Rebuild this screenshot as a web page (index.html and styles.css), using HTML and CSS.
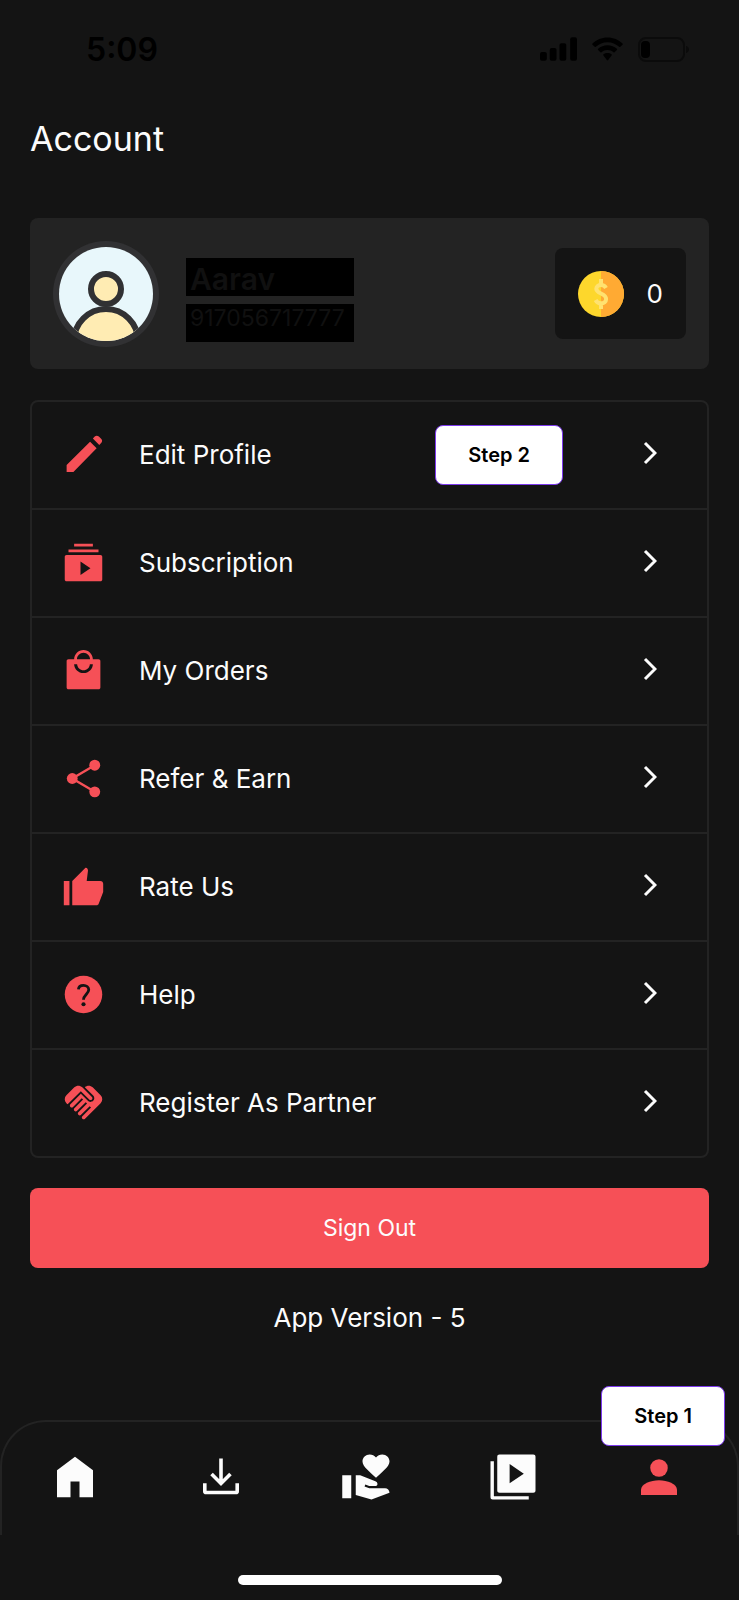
FILE: index.html
```html
<!DOCTYPE html>
<html lang="en">
  <head>
    <meta charset="UTF-8" />
    <meta name="viewport" content="width=device-width, initial-scale=1.0" />
    <title>Account</title>
    <link rel="stylesheet" href="styles.css">
  </head>
  <body>
    <!-- Status bar -->
    <div class="statusbar">
      <span class="time">5:09</span>
      <div class="status-icons">
        <svg width="37" height="24" viewBox="0 0 38 24">
          <rect x="0" y="15" width="7" height="9" rx="2" />
          <rect x="10" y="11" width="7" height="13" rx="2" />
          <rect x="20" y="6" width="7" height="18" rx="2" />
          <rect x="31" y="0" width="7" height="24" rx="2" />
        </svg>
        <svg width="31" height="24" viewBox="0 0 32 24">
          <path d="M16 0C10 0 4.500 2.300 .5 6.200c-.4.400-.4.900 0 1.300L2.800 9.800c.3.300.9.300 1.200 0C7.200 6.700 11.400 5 16 5s8.800 1.700 12 4.800c.3.300.9.300 1.200 0l2.300-2.300c.4-.4.400-.9 0-1.300C27.500 2.300 22 0 16 0z" />
          <path d="M16 8c-3.700 0-7.100 1.400-9.700 3.800-.4.300-.4.900 0 1.200l2.400 2.400c.3.300.8.300 1.200 0C11.500 13.900 13.600 13 16 13s4.500.9 6.100 2.400c.4.300.9.300 1.200 0l2.400-2.400c.4-.3.400-.9 0-1.200C23.100 9.400 19.700 8 16 8z" />
          <path d="M16 16c-1.600 0-3 .5-4.200 1.500-.4.300-.4.900 0 1.200l3.500 4.700c.4.500 1 .5 1.400 0l3.500-4.700c.4-.3.400-.9 0-1.200C19 16.500 17.600 16 16 16z" />
        </svg>
        <svg width="51" height="25" viewBox="0 0 51 25">
          <rect class="battery-shell" x="1" y="1" width="45" height="23" rx="7" />
          <rect x="3" y="4" width="9" height="17" rx="4" />
          <path class="battery-cap" d="M48 9c2 .6 3 1.900 3 3.500S50 15.400 48 16z" />
        </svg>
      </div>
    </div>

    <main>
      <h1>Account</h1>

      <!-- Profile card -->
      <section class="profile">
        <svg class="avatar" viewBox="0 0 106 106">
          <defs>
            <clipPath id="face"><circle cx="53" cy="53" r="47" /></clipPath>
          </defs>
          <circle cx="53" cy="53" r="53" fill="#313133" />
          <circle cx="53" cy="53" r="47" fill="#e8f7fb" />
          <g clip-path="url(#face)" fill="#ffecb3" stroke="#313133" stroke-width="6">
            <circle cx="53" cy="100" r="32" />
            <circle cx="53" cy="48" r="15" />
          </g>
        </svg>
        <div class="user">
          <strong class="user-name">Aarav</strong>
          <span class="user-phone">917056717777</span>
        </div>
        <div class="coins">
          <svg width="46" height="46" viewBox="0 0 46 46">
            <circle cx="23" cy="23" r="23" fill="#fdd72c" />
            <path d="M23 0a23 23 0 0 1 0 46z" fill="#ffaa33" />
            <path d="M28 17c-1-2-2.700-3-5-3-2.800 0-4.700 1.400-4.700 3.700 0 5.400 9.800 4.200 9.800 10.200 0 2.700-2.100 4.400-5.100 4.400-2.500 0-4.300-1.100-5.400-3.300M23 8v6M23 32v6" fill="none" stroke="#ffe270" stroke-width="4" />
          </svg>
          <span>0</span>
        </div>
      </section>

      <!-- Menu -->
      <nav class="menu">
        <a href="#">
          <svg class="icon" viewBox="0 0 24 24"><path d="M3 17.600V21.300h3.600L19 8.700 15.500 5.200zM17 3.500l3.400 3.400 1-1c.7-.7.7-1.700 0-2.300l-1.200-1.200c-.7-.6-1.600-.6-2.200 0z" /></svg>
          <span>Edit Profile</span>
          <svg class="chevron" viewBox="0 0 14 24"><path d="M2 2l10 10L2 22" /></svg>
          <b class="step step-2">Step 2</b>
        </a>
        <a href="#">
          <svg class="icon" viewBox="0 0 24 24"><path d="M7 2h10v1.500H7zM4 5h16v1.500H4zM21 8H3c-.6 0-1 .4-1 1v12c0 .6.400 1 1 1h18c.6 0 1-.4 1-1V9c0-.6-.4-1-1-1zM10.400 18.600v-7.200l5.300 3.600z" /></svg>
          <span>Subscription</span>
          <svg class="chevron" viewBox="0 0 14 24"><path d="M2 2l10 10L2 22" /></svg>
        </a>
        <a href="#">
          <svg class="icon" viewBox="0 0 24 24"><path d="M20 6h-3c0-2.760-2.240-5-5-5S7 3.240 7 6H4c-.6 0-1 .4-1 1v14c0 .6.400 1 1 1h16c.6 0 1-.4 1-1V7c0-.6-.4-1-1-1zm-8-3.500c1.900 0 3.500 1.600 3.500 3.500h-7c0-1.900 1.600-3.500 3.500-3.500zM12 13.300c-2.760 0-4.900-2-5-4.700h1.600c.1 1.800 1.600 3.200 3.400 3.200s3.300-1.400 3.400-3.200H17c-.1 2.700-2.240 4.700-5 4.700z" /></svg>
          <span>My Orders</span>
          <svg class="chevron" viewBox="0 0 14 24"><path d="M2 2l10 10L2 22" /></svg>
        </a>
        <a href="#">
          <svg class="icon" viewBox="0 0 24 24">
            <path class="wire" d="M18 4.900L6 12l12 7.100" />
            <circle cx="18" cy="4.900" r="2.900" />
            <circle cx="6" cy="12" r="2.900" />
            <circle cx="18" cy="19.100" r="2.900" />
          </svg>
          <span>Refer &amp; Earn</span>
          <svg class="chevron" viewBox="0 0 14 24"><path d="M2 2l10 10L2 22" /></svg>
        </a>
        <a href="#">
          <svg class="icon" viewBox="0 0 24 24"><path d="M1.500 22h3V9h-3v13zM22.500 10.500c0-.9-.6-1.500-1.500-1.500h-7.300l.7-5.500c.1-.8-.8-2-1.600-1.300L6 9V22h13c.5 0 .9-.3 1.100-.8l2.300-6c.1-.2.100-.4.100-.7z" /></svg>
          <span>Rate Us</span>
          <svg class="chevron" viewBox="0 0 14 24"><path d="M2 2l10 10L2 22" /></svg>
        </a>
        <a href="#">
          <svg class="icon" viewBox="0 0 24 24">
            <circle cx="12" cy="12" r="10" />
            <path class="cut" d="M9.300 9.300C9.400 7.900 10.500 7.100 12 7.100s2.800.9 2.800 2.400c0 2.100-2.800 2.700-2.800 5.300" />
            <circle class="dot" cx="12" cy="17.200" r="1.100" />
          </svg>
          <span>Help</span>
          <svg class="chevron" viewBox="0 0 14 24"><path d="M2 2l10 10L2 22" /></svg>
        </a>
        <a href="#">
          <svg class="icon" viewBox="0 0 24 24"><path d="M16.480 10.410c-.39.390-1.040.390-1.430 0l-4.470-4.460-7.050 7.040-.66-.63c-1.170-1.170-1.170-3.070 0-4.240l4.240-4.240c1.170-1.170 3.070-1.170 4.240 0L16.480 9c.39.390.39 1.020 0 1.410zM17.180 8.290c.78.780.78 2.050 0 2.830-1.270 1.270-2.610.220-2.830 0l-3.760-3.760-5.570 5.570c-.39.390-.39 1.020 0 1.410.39.390 1.020.390 1.420 0l4.620-4.620.71.710-4.620 4.620c-.39.390-.39 1.020 0 1.410.39.390 1.020.390 1.420 0l4.620-4.620.71.710-4.620 4.620c-.39.390-.39 1.020 0 1.410.39.390 1.020.390 1.410 0l4.620-4.620.71.710-4.620 4.620c-.39.390-.39 1.020 0 1.410.39.390 1.020.390 1.410 0l8.320-8.340c1.170-1.170 1.170-3.070 0-4.240l-4.240-4.240c-1.150-1.150-3.010-1.170-4.180-.06l4.470 4.470z" /></svg>
          <span>Register As Partner</span>
          <svg class="chevron" viewBox="0 0 14 24"><path d="M2 2l10 10L2 22" /></svg>
        </a>
      </nav>

      <button class="sign-out" type="button">Sign Out</button>
      <p class="version">App Version - 5</p>
    </main>

    <!-- Bottom tabs -->
    <footer>
      <nav class="tabs">
        <a href="#" aria-label="Home">
          <svg viewBox="0 0 24 24"><path d="M4 21V9l8-6 8 6v12h-6v-7h-4v7z" /></svg>
        </a>
        <a href="#" aria-label="Downloads">
          <svg viewBox="0 0 24 24"><path class="line" d="M12 3.800v11M7.800 10.700l4.200 4.200 4.200-4.200M4.800 14.800v3.500c0 .4.200.6.600.6h13.200c.4 0 .6-.2.600-.6v-3.500" /></svg>
        </a>
        <a href="#" aria-label="Donate">
          <svg viewBox="0 0 24 24"><path d="M1 11.200h4v10.200H1zM16 12.300c-3-2.800-6-5-6-7.200C10 3.300 11.450 2 13.200 2c1.100 0 2.100.5 2.800 1.300C16.700 2.500 17.700 2 18.800 2 20.550 2 22 3.300 22 5.100c0 2.200-3 4.400-6 7.200zM20 17h-7l-2.090-.73.330-.94L13 16h2.820c.65 0 .9-.5.800-1.100-.1-.5-.4-.8-.9-1L8.970 11.200H7v8.800L14 22l8-3c0-1.100-.9-2-2-2z" /></svg>
        </a>
        <a href="#" aria-label="Videos">
          <svg viewBox="0 0 24 24"><path d="M3.500 5H2v16c0 .6.400 1 1 1h16v-1.500H3.500V5zM21 2H6c-.6 0-1 .4-1 1v15c0 .6.400 1 1 1h15c.6 0 1-.4 1-1V3c0-.6-.4-1-1-1zM10.500 14.800V6.200l6.300 4.300z" /></svg>
        </a>
        <a class="active" href="#" aria-label="Account">
          <svg viewBox="0 0 24 24"><circle cx="12" cy="8" r="3.900" /><path d="M4 20v-2.300c0-2.700 4.300-4.300 8-4.300s8 1.600 8 4.300V20z" /></svg>
        </a>
      </nav>
      <b class="step step-1">Step 1</b>
      <div class="home-indicator"></div>
    </footer>
  </body>
</html>
```
FILE: styles.css
```css
:root {
  --bg: #141414;
  --card: #232323;
  --line: #232323;
  --red: #f65057;
  --white: #fcfcfc;
}

* {
  margin: 0;
  padding: 0;
  box-sizing: border-box;
}

body {
  font-family: Inter, "Liberation Sans", sans-serif;
  background-color: var(--bg);
  color: var(--white);
  display: flex;
  flex-direction: column;
  min-height: 100vh;
}

a {
  color: inherit;
  text-decoration: none;
}

/* Status bar */
.statusbar {
  display: flex;
  justify-content: space-between;
  align-items: center;
  height: 98px;
  padding: 0 50px 0 86px;
  color: #000;
}

.time {
  font-size: 32px;
  font-weight: 600;
}

.status-icons {
  display: flex;
  align-items: center;
  gap: 15px;
}

.battery-shell {
  fill: none;
  stroke: #0b0b0b;
  stroke-width: 2;
}

.battery-cap {
  fill: #0b0b0b;
}

main {
  flex: 1;
  padding: 0 30px;
}

h1 {
  font-size: 34px;
  font-weight: 400;
  line-height: 40px;
  margin: 21px 0 59px;
}

/* Profile card */
.profile {
  display: flex;
  align-items: center;
  height: 151px;
  padding: 0 23px;
  background-color: var(--card);
  border-radius: 8px;
}

.avatar {
  width: 106px;
  height: 106px;
}

.user {
  display: flex;
  flex-direction: column;
  gap: 8px;
  width: 168px;
  margin-top: 13px;
  margin-left: 27px;
  margin-right: auto;
  color: #101010;
}

.user-name,
.user-phone {
  height: 38px;
  padding-left: 4px;
  background-color: #000;
}

.user-name {
  font-size: 30px;
  font-weight: 600;
  line-height: 42px;
}

.user-phone {
  font-size: 23px;
  line-height: 28px;
}

.coins {
  display: flex;
  align-items: center;
  gap: 23px;
  height: 91px;
  padding: 0 23px;
  background-color: var(--bg);
  border-radius: 8px;
  font-size: 26px;
}

/* Menu */
.menu {
  margin-top: 31px;
  border: 2px solid var(--line);
  border-radius: 8px;
}

.menu a {
  position: relative;
  display: flex;
  align-items: center;
  height: 108px;
  padding: 0 50px 2px 29px;
  border-bottom: 2px solid var(--line);
  font-size: 26px;
}

.menu a:last-child {
  height: 106px;
  border-bottom: none;
}

.menu span {
  flex: 1;
  margin-left: 33px;
}

.icon {
  width: 45px;
  height: 45px;
  fill: var(--red);
}

.icon .cut {
  fill: none;
  stroke: var(--bg);
  stroke-width: 1.5;
}

.icon .wire {
  fill: none;
  stroke: var(--red);
  stroke-width: 1.3;
}

.icon .dot {
  fill: var(--bg);
}

.chevron {
  width: 14px;
  height: 24px;
  margin-bottom: 2px;
  fill: none;
  stroke: var(--white);
  stroke-width: 3;
}

/* Step labels over the screen */
.step {
  position: absolute;
  height: 60px;
  padding: 0 32px;
  background-color: #fff;
  border: 1px solid #7c3aed;
  border-radius: 8px;
  color: #000;
  font-size: 20px;
  font-weight: 600;
  line-height: 58px;
}

.step-2 {
  top: 23px;
  right: 144px;
}

.step-1 {
  top: -34px;
  right: 14px;
}

.sign-out {
  display: block;
  width: 100%;
  height: 80px;
  margin-top: 30px;
  background-color: var(--red);
  border: none;
  border-radius: 8px;
  color: var(--white);
  font-family: inherit;
  font-size: 23px;
}

.version {
  margin-top: 34px;
  font-size: 26px;
  line-height: 32px;
  text-align: center;
}

/* Bottom tabs */
footer {
  position: relative;
  height: 180px;
}

.tabs {
  display: flex;
  height: 115px;
  padding: 0 5px 4px 0;
  border: 2px solid var(--line);
  border-bottom: none;
  border-radius: 46px 46px 0 0;
}

.tabs a {
  flex: 1;
  display: flex;
  justify-content: center;
  align-items: center;
}

.tabs svg {
  width: 54px;
  height: 54px;
  fill: var(--white);
}

.tabs .active svg {
  fill: var(--red);
}

.tabs .line {
  fill: none;
  stroke: var(--white);
  stroke-width: 1.6;
}

.home-indicator {
  width: 264px;
  height: 10px;
  margin: 40px auto 0;
  background-color: #fff;
  border-radius: 5px;
}
```
